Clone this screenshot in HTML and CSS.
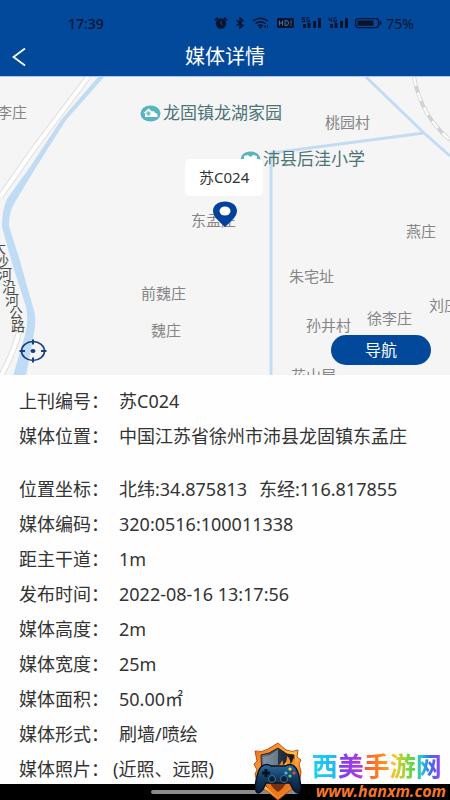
FILE: index.html
```
<!DOCTYPE html>
<html lang="zh-CN">
<head>
    <meta charset="UTF-8">
    <meta name="viewport" content="width=device-width, initial-scale=1.0">
    <title>媒体详情</title>
    <link rel="stylesheet" href="styles.css">
</head>
<body>
    <header class="top">
        <div class="status-bar">
            <span class="time">17:39</span>
            <div class="status-icons">
                <svg width="14" height="12" viewBox="0 0 14 12">
                    <circle cx="7" cy="6.5" r="5.2"/>
                    <path d="M1 3.4 4 .8M13 3.4 10 .8" stroke="#07142c" stroke-width="1.8"/>
                    <path d="M7 4v3l1.6 1" fill="none" stroke="#02489b" stroke-width="1"/>
                </svg>
                <svg width="10" height="12" viewBox="0 0 10 12">
                    <path d="M1.5 3.2 8 8.4 5 11V1l3 2.6-6.5 5.2" fill="none" stroke="#07142c" stroke-width="1.4"/>
                </svg>
                <svg width="18" height="12" viewBox="0 0 18 12">
                    <path d="M1 4q7.500-5.500 15 0M3.500 6.500q5-3.500 10 0M6 9q2.500-1.800 5 0" fill="none" stroke="#07142c" stroke-width="1.5"/>
                    <path d="M7 10h3l-1.500 1.500zM13 8v3M15.500 8v3" stroke="#07142c" stroke-width="1"/>
                </svg>
                <svg width="17" height="12" viewBox="0 0 17 12">
                    <rect y="1" width="17" height="10" rx="1.500"/>
                    <path d="M2.500 3.500v5M5.500 3.500v5M2.500 6h3M8 3.500v5h1q2.500 0 2.500-2.500T9 3.500zM14 3.500v3M14 7.500v1.500" fill="none" stroke="#4670a8" stroke-width="1"/>
                </svg>
                <svg width="20" height="12" viewBox="0 0 20 12">
                    <path d="M4 .7H1v2h2.500v2H.8M8.500.7H6v4h2.500V3H7.500" fill="none" stroke="#07142c" stroke-width="1"/>
                    <path d="M2 7h3v4H2zM6.500 6h3v5h-3zM12 4h3v7h-3zM17 1h3v10h-3z"/>
                </svg>
                <svg width="20" height="12" viewBox="0 0 20 12">
                    <path d="M1 .7v2.500h3M3.500.7v4M8.500.7H6v4h2.500V3H7.500" fill="none" stroke="#07142c" stroke-width="1"/>
                    <path d="M2 7h3v4H2zM6.500 6h3v5h-3zM12 4h3v7h-3zM17 1h3v10h-3z"/>
                </svg>
                <svg width="27" height="12" viewBox="0 0 27 12">
                    <rect x=".6" y="1.600" width="22.800" height="9" rx="2.500" fill="none" stroke="#07142c" stroke-width="1.200"/>
                    <rect x="2.500" y="3.500" width="16" height="5.200"/>
                    <path d="M24.500 3 27 6l-2.500 3z"/>
                </svg>
            </div>
            <span class="battery">75%</span>
        </div>
        <div class="nav-bar">
            <button class="back-btn" type="button" aria-label="返回">
                <svg width="14" height="20" viewBox="0 0 14 20">
                    <path d="M13 1.500 1.500 10 13 18.500" fill="none" stroke="#fff" stroke-width="1.800"/>
                </svg>
            </button>
            <h1>媒体详情</h1>
        </div>
    </header>

    <main>
        <section class="map">
            <svg class="map-lines" viewBox="0 0 450 299" preserveAspectRatio="xMinYMin slice">
                <!-- road -->
                <path d="M88 0 67 28 33 73 0 120M20 252Q14 275 1 299" fill="none" stroke="#dedede" stroke-width="6"/>
                <path d="M88 0 67 28 33 73 0 120M20 252Q14 275 1 299" fill="none" stroke="#fff" stroke-width="4"/>
                <!-- river -->
                <path d="M98 0 61 43 30 90 7 122Q2 133 2 150L12 186 26 230Q29 245 25 258L13 299H26L34 256Q37 241 33 230L20 184 9 149Q9 134 15 125L35 92 66 43 104 0Z" fill="#c0dbf4"/>
                <!-- canals -->
                <path d="M366 0 424 56 450 79M424 56 271 76V299" fill="none" stroke="#c3dcf4" stroke-width="3"/>
                <!-- railway -->
                <path d="M414 0Q421 39 450 63" fill="none" stroke="#d2d2d2" stroke-width="4"/>
                <path d="M414 0Q421 39 450 63" fill="none" stroke="#fafafa" stroke-width="2.500" stroke-dasharray="9 7"/>
                <text class="road-name" x="-8 -5 -2 2 5 9 11" y="176 189 202 215 228 241 254">大沙河沿河公路</text>
            </svg>

            <span class="place li">李庄</span>
            <span class="place taoyuan">桃园村</span>
            <span class="place dongmeng">东孟庄</span>
            <span class="place yan">燕庄</span>
            <span class="place zhu">朱宅址</span>
            <span class="place qianwei">前魏庄</span>
            <span class="place wei">魏庄</span>
            <span class="place sun">孙井村</span>
            <span class="place xuli">徐李庄</span>
            <span class="place liu">刘庄</span>
            <span class="place hua">花山屋</span>

            <div class="poi home">
                <svg width="21" height="17" viewBox="0 0 21 17">
                    <ellipse cx="10.500" cy="8.500" rx="10" ry="8" fill="#58b4c0"/>
                    <path d="M3.500 8 8.500 3.500 12 6.500Q14 5 15 8q3 0 2.500 4H5V8z" fill="#fff"/>
                    <path d="M7 7h3v3H7zM8.500 7v3M7 8.500h3" fill="none" stroke="#58b4c0" stroke-width=".8"/>
                </svg>
                <span>龙固镇龙湖家园</span>
            </div>
            <div class="poi school">
                <svg width="21" height="17" viewBox="0 0 21 17">
                    <ellipse cx="10.500" cy="8.500" rx="10" ry="8" fill="#58b4c0"/>
                    <path d="M4 5 8 4l2.500 2L13 4l4 1v7l-6.500 1L4 12z" fill="#fff"/>
                </svg>
                <span>沛县后洼小学</span>
            </div>

            <div class="callout">苏C024</div>
            <svg class="pin" width="26" height="26" viewBox="0 0 26 26">
                <path d="M13 .5C6 .5 1 4.500 1 10c0 6 8 12 12 16 4-4 12-10 12-16C25 4.500 20 .5 13 .5z" fill="#02429a"/>
                <ellipse cx="13" cy="10" rx="5.500" ry="4.500" fill="#fff"/>
            </svg>
            <button class="locate-btn" type="button" aria-label="定位">
                <svg width="28" height="24" viewBox="0 0 28 24">
                    <ellipse cx="14" cy="12" rx="11.500" ry="9.500" fill="none" stroke="#173f83" stroke-width="1.600"/>
                    <path d="M14 .5v5M14 18.500v5M.5 12H6M22 12h5.500" stroke="#173f83" stroke-width="2"/>
                    <ellipse cx="14" cy="12" rx="2.500" ry="2" fill="#173f83"/>
                </svg>
            </button>
            <button class="go-btn" type="button">导航</button>
        </section>

        <dl class="details">
            <div class="row"><dt>上刊编号：</dt><dd>苏C024</dd></div>
            <div class="row address"><dt>媒体位置：</dt><dd>中国江苏省徐州市沛县龙固镇东孟庄</dd></div>
            <div class="row"><dt>位置坐标：</dt><dd><span>北纬:34.875813</span><span>东经:116.817855</span></dd></div>
            <div class="row"><dt>媒体编码：</dt><dd>320:0516:100011338</dd></div>
            <div class="row"><dt>距主干道：</dt><dd>1m</dd></div>
            <div class="row"><dt>发布时间：</dt><dd>2022-08-16 13:17:56</dd></div>
            <div class="row"><dt>媒体高度：</dt><dd>2m</dd></div>
            <div class="row"><dt>媒体宽度：</dt><dd>25m</dd></div>
            <div class="row"><dt>媒体面积：</dt><dd>50.00㎡</dd></div>
            <div class="row"><dt>媒体形式：</dt><dd>刷墙/喷绘</dd></div>
            <div class="row photos"><dt>媒体照片：</dt><dd>(近照、远照)</dd></div>
        </dl>
    </main>

    <div class="home-bar"><span></span></div>

    <div class="watermark">
        <svg width="52" height="58" viewBox="0 0 52 58">
            <defs>
                <linearGradient id="flame" x1="0" y1="0" x2="1" y2="1">
                    <stop offset="0" stop-color="#e8641a"/>
                    <stop offset=".5" stop-color="#ffc04a"/>
                    <stop offset="1" stop-color="#e2470c"/>
                </linearGradient>
                <linearGradient id="steel" x1="0" y1="0" x2="1" y2="0">
                    <stop offset="0" stop-color="#64788c"/>
                    <stop offset=".5" stop-color="#26384b"/>
                    <stop offset="1" stop-color="#101a26"/>
                </linearGradient>
                <linearGradient id="pad" x1="0" y1="0" x2="0" y2="1">
                    <stop offset="0" stop-color="#2b6d9e"/>
                    <stop offset=".5" stop-color="#12385c"/>
                    <stop offset="1" stop-color="#091b33"/>
                </linearGradient>
            </defs>
            <path d="M26 1 34 8q7 3 12 0l-1 7 4 3-2 4 2 8-2 14-10 5-11 9-11-9-9-5-3-12 2-4-3-6 3-3-2-10q7 2 13-2z" fill="url(#flame)" stroke="#c4500f"/>
            <path d="M26 6 35 12l7 1-1 22q-2 11-15 18Q12 46 10 35L9 13l8-2z" fill="url(#steel)" stroke="#412011"/>
            <path d="M26 7v45q-11-6-14-16L11 15l7-2z" fill="#a9b9c5" opacity=".5"/>
            <path d="M13 41h26q-3 8-13 14-10-6-13-14z" fill="#e9781c"/>
            <path d="M18 41h16q-2 5-8 9-6-4-8-9z" fill="#7d2f12"/>
            <path d="M21 25q8-1 9-7 2 4 0 6 5-2 5-10 4 3 3 8 3-2 3-6 4 5 1 12l-5 3z" fill="#ff8a17"/>
            <path d="M28 26q5-2 6-6 2 3 0 5 4-1 5-4 1 5-3 8z" fill="#ffdc59"/>
            <path d="M10 24q5-3 9 0h14q5-3 9 0 4 3 6 15 2 10-2 12-4 0-8-10H14Q10 51 6 51q-4-2-2-12Q6 27 10 24z" fill="url(#pad)" stroke="#071225" stroke-width="1.500"/>
            <path d="M14 27v8M10 31h8" stroke="#061323" stroke-width="3"/>
            <circle cx="20" cy="37" r="3.500" fill="#0a1e33" stroke="#3475a0"/>
            <circle cx="32" cy="37" r="3.500" fill="#0a1e33" stroke="#3475a0"/>
            <circle cx="38" cy="27" r="1.600" fill="#ffd33b"/>
            <circle cx="42" cy="31" r="1.600" fill="#ef4545"/>
            <circle cx="34" cy="31" r="1.600" fill="#4bb6f2"/>
            <circle cx="38" cy="34" r="1.600" fill="#61cc72"/>
        </svg>
        <div class="site">
            <div class="site-name">西美手游网</div>
            <a class="site-url" href="#">www.hanxm.com</a>
        </div>
    </div>
</body>
</html>
```
FILE: styles.css
```
* {
    margin: 0;
    padding: 0;
    box-sizing: border-box;
}

body {
    position: relative;
    min-height: 100vh;
    overflow-x: hidden;
    font-family: "Noto Sans", "Noto Sans CJK SC", sans-serif;
    background: #fefefe;
    color: #333;
}

svg {
    display: block;
}

button {
    border: none;
    background: none;
    font-family: inherit;
    cursor: pointer;
}

.top {
    background: #02489b;
    color: white;
}

.status-bar {
    display: flex;
    align-items: center;
    height: 38px;
    padding: 8px 36px 0 68px;
    font-size: 14px;
    color: #07142c;
}

.time {
    flex: 1;
    font-weight: 500;
}

.status-icons {
    display: flex;
    align-items: center;
    gap: 7px;
    margin-right: 4px;
    fill: #07142c;
}

.nav-bar {
    position: relative;
    display: flex;
    align-items: center;
    justify-content: center;
    height: 38px;
}

.back-btn {
    position: absolute;
    left: 12px;
    top: 9px;
}

.nav-bar h1 {
    font-size: 20px;
    font-weight: normal;
    line-height: 38px;
}

/* Map */
.map {
    position: relative;
    height: 299px;
    overflow: hidden;
    background: #f5f5f5;
    border-top: 1px solid #a9c9ec;
}

.map-lines {
    width: 100%;
    height: 100%;
}

.road-name {
    font-size: 14px;
    fill: #4b4b4b;
}

.place {
    position: absolute;
    font-size: 15px;
    line-height: 20px;
    color: #858585;
    white-space: nowrap;
}

.li { left: -3px; top: 25px; }
.taoyuan { left: 325px; top: 35px; }
.dongmeng { left: 191px; top: 133px; }
.yan { left: 406px; top: 144px; }
.zhu { left: 289px; top: 189px; }
.qianwei { left: 141px; top: 206px; }
.wei { left: 151px; top: 243px; }
.sun { left: 306px; top: 238px; }
.xuli { left: 367px; top: 231px; }
.liu { left: 429px; top: 218px; }
.hua { left: 291px; top: 288px; }

.poi {
    position: absolute;
    display: flex;
    align-items: center;
    gap: 2px;
    font-size: 17px;
    line-height: 20px;
    color: #4c7475;
    white-space: nowrap;
}

.home { left: 140px; top: 26px; }
.school { left: 240px; top: 72px; }

.callout {
    position: absolute;
    left: 185px;
    top: 82px;
    padding: 0 14px;
    border-radius: 5px;
    background: white;
    font-size: 15px;
    line-height: 37px;
}

.pin {
    position: absolute;
    left: 212px;
    top: 124px;
}

.locate-btn {
    position: absolute;
    left: 19px;
    bottom: 12px;
}

.go-btn {
    position: absolute;
    right: 19px;
    bottom: 10px;
    width: 100px;
    height: 30px;
    border-radius: 15px;
    background: #02489b;
    color: white;
    font-size: 16px;
    line-height: 30px;
}

/* Details */
.details {
    padding: 9px 19px 12px;
    font-size: 18px;
    line-height: 35px;
}

.row {
    display: flex;
}

.row dt {
    flex: none;
    width: 100px;
}

.row dd {
    display: flex;
    gap: 12px;
    white-space: nowrap;
}

.address {
    margin-bottom: 18px;
}

.photos dt {
    width: 94px;
}

.home-bar {
    position: absolute;
    left: 0;
    right: 0;
    bottom: 0;
    display: flex;
    align-items: center;
    justify-content: center;
    height: 16px;
    background: black;
}

.home-bar span {
    width: 33%;
    height: 4px;
    border-radius: 2px;
    background: #8b8b8b;
}

/* Watermark */
.watermark {
    position: absolute;
    right: 4px;
    bottom: 0;
    display: flex;
    align-items: flex-end;
    gap: 8px;
}

.site-name {
    width: max-content;
    font-size: 26px;
    font-weight: bold;
    line-height: 32px;
    background: linear-gradient(90deg, #18d4ee 0%, #22b8f5 18%, #7c3df0 22%, #b63bd8 38%, #ff5a2a 42%, #ff9a18 58%, #f2c928 63%, #55d84a 78%, #21c6d8 84%, #3b6cf2 91%, #a63df0 100%);
    -webkit-background-clip: text;
    background-clip: text;
    color: transparent;
}

.site-url {
    display: block;
    padding-left: 4px;
    font-family: "Open Sans", sans-serif;
    font-size: 16px;
    font-weight: bold;
    font-style: italic;
    line-height: 18px;
    color: #f4762a;
    text-decoration: none;
    text-shadow: 1px 0 black, -1px 0 black, 0 1px black, 0 -1px black;
}
```
